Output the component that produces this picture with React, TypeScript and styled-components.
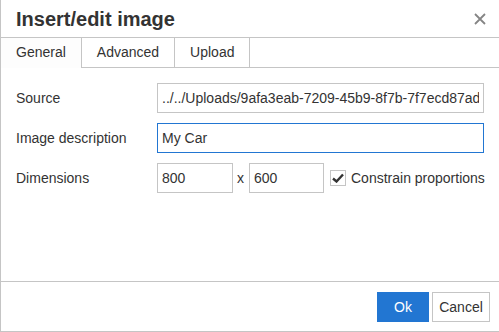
import styled, { createGlobalStyle } from "styled-components";

const GlobalStyle = createGlobalStyle`
  html, body {
    margin: 0;
    padding: 0;
    overflow: hidden;
    background: #fff;
  }
  body {
    font-family: "Liberation Sans", Arial, sans-serif;
    color: #333;
  }
`;

const Window = styled.div`
  width: 499px;
  height: 332px;
  box-sizing: border-box;
  border-left: 1px solid #c5c5c5;
  border-bottom: 1px solid #c5c5c5;
  background: #fff;
  display: flex;
  flex-direction: column;
`;

const Head = styled.div`
  height: 37px;
  flex: none;
  border-bottom: 1px solid #c5c5c5;
  display: flex;
  align-items: center;
  justify-content: space-between;
  padding: 0 11px 0 15px;
`;

const Title = styled.h1`
  margin: 0;
  font-size: 20px;
  font-weight: bold;
  color: #333;
  line-height: 36px;
`;

const Close = styled.button`
  border: 0;
  background: none;
  padding: 0;
  width: 16px;
  height: 16px;
  display: flex;
  align-items: center;
  justify-content: center;
  cursor: pointer;
`;

const Tabs = styled.div`
  height: 29px;
  flex: none;
  display: flex;
  border-bottom: 1px solid #c5c5c5;
`;

const Tab = styled.div<{ $active?: boolean }>`
  padding: 0 15px;
  height: ${(p) => (p.$active ? "30px" : "29px")};
  line-height: 29px;
  font-size: 14px;
  color: #333;
  border-right: 1px solid #c5c5c5;
  background: ${(p) => (p.$active ? "#fdfdfd" : "#fff")};
  margin-bottom: ${(p) => (p.$active ? "-1px" : "0")};
  position: relative;
  cursor: pointer;
`;

const Body = styled.div`
  flex: 1;
  padding: 15px 15px 0 15px;
  display: flex;
  flex-direction: column;
  gap: 10px;
`;

const Row = styled.div`
  display: flex;
  align-items: center;
  height: 30px;
`;

const Label = styled.label`
  width: 141px;
  flex: none;
  font-size: 14px;
  color: #333;
`;

const TextInput = styled.input<{ $focus?: boolean; $width?: number }>`
  box-sizing: border-box;
  height: 30px;
  ${(p) => (p.$width ? `width: ${p.$width}px; flex: none;` : "flex: 1; min-width: 0;")}
  border: 1px solid ${(p) => (p.$focus ? "#2276d2" : "#c5c5c5")};
  padding: 0 4px;
  font-family: "Liberation Sans", Arial, sans-serif;
  font-size: 14px;
  color: #333;
  background: #fff;
  outline: none;
  border-radius: 0;
`;

const Times = styled.span`
  font-size: 14px;
  color: #333;
  padding: 0 5px 0 4px;
`;

const Check = styled.span`
  box-sizing: border-box;
  width: 16px;
  height: 16px;
  margin-left: 6px;
  border: 1px solid #c5c5c5;
  display: flex;
  align-items: center;
  justify-content: center;
  flex: none;
`;

const CheckText = styled.span`
  margin-left: 5px;
  font-size: 14px;
  color: #333;
  white-space: nowrap;
`;

const Foot = styled.div`
  height: 50px;
  flex: none;
  border-top: 1px solid #c5c5c5;
  display: flex;
  justify-content: flex-end;
  align-items: flex-start;
  padding: 10px 9px 0 0;
  gap: 3px;
  box-sizing: border-box;
`;

const Button = styled.button<{ $primary?: boolean }>`
  height: 30px;
  box-sizing: border-box;
  padding: 0 ${(p) => (p.$primary ? "16px" : "4px")};
  min-width: ${(p) => (p.$primary ? "52px" : "58px")};
  font-family: "Liberation Sans", Arial, sans-serif;
  font-size: 14px;
  border: 1px solid ${(p) => (p.$primary ? "#2276d2" : "#c5c5c5")};
  background: ${(p) => (p.$primary ? "#2276d2" : "#fff")};
  color: ${(p) => (p.$primary ? "#fff" : "#333")};
  border-radius: 0;
  cursor: pointer;
`;

export default function App() {
  return (
    <>
      <GlobalStyle />
      <Window>
        <Head>
          <Title>Insert/edit image</Title>
          <Close aria-label="Close">
            <svg width="12" height="12" viewBox="0 0 12 12">
              <path d="M1 1L11 11M11 1L1 11" stroke="#858585" strokeWidth="1.8" />
            </svg>
          </Close>
        </Head>
        <Tabs>
          <Tab $active>General</Tab>
          <Tab>Advanced</Tab>
          <Tab>Upload</Tab>
        </Tabs>
        <Body>
          <Row>
            <Label>Source</Label>
            <TextInput defaultValue="../../Uploads/9afa3eab-7209-45b9-8f7b-7f7ecd87ad4e.jpg" />
          </Row>
          <Row>
            <Label>Image description</Label>
            <TextInput $focus defaultValue="My Car" />
          </Row>
          <Row>
            <Label>Dimensions</Label>
            <TextInput $width={76} defaultValue="800" />
            <Times>x</Times>
            <TextInput $width={75} defaultValue="600" />
            <Check>
              <svg width="12" height="10" viewBox="0 0 12 10">
                <path d="M1 5.5L4.5 8.5L11 1.5" fill="none" stroke="#333" strokeWidth="2.4" />
              </svg>
            </Check>
            <CheckText>Constrain proportions</CheckText>
          </Row>
        </Body>
        <Foot>
          <Button $primary>Ok</Button>
          <Button>Cancel</Button>
        </Foot>
      </Window>
    </>
  );
}
